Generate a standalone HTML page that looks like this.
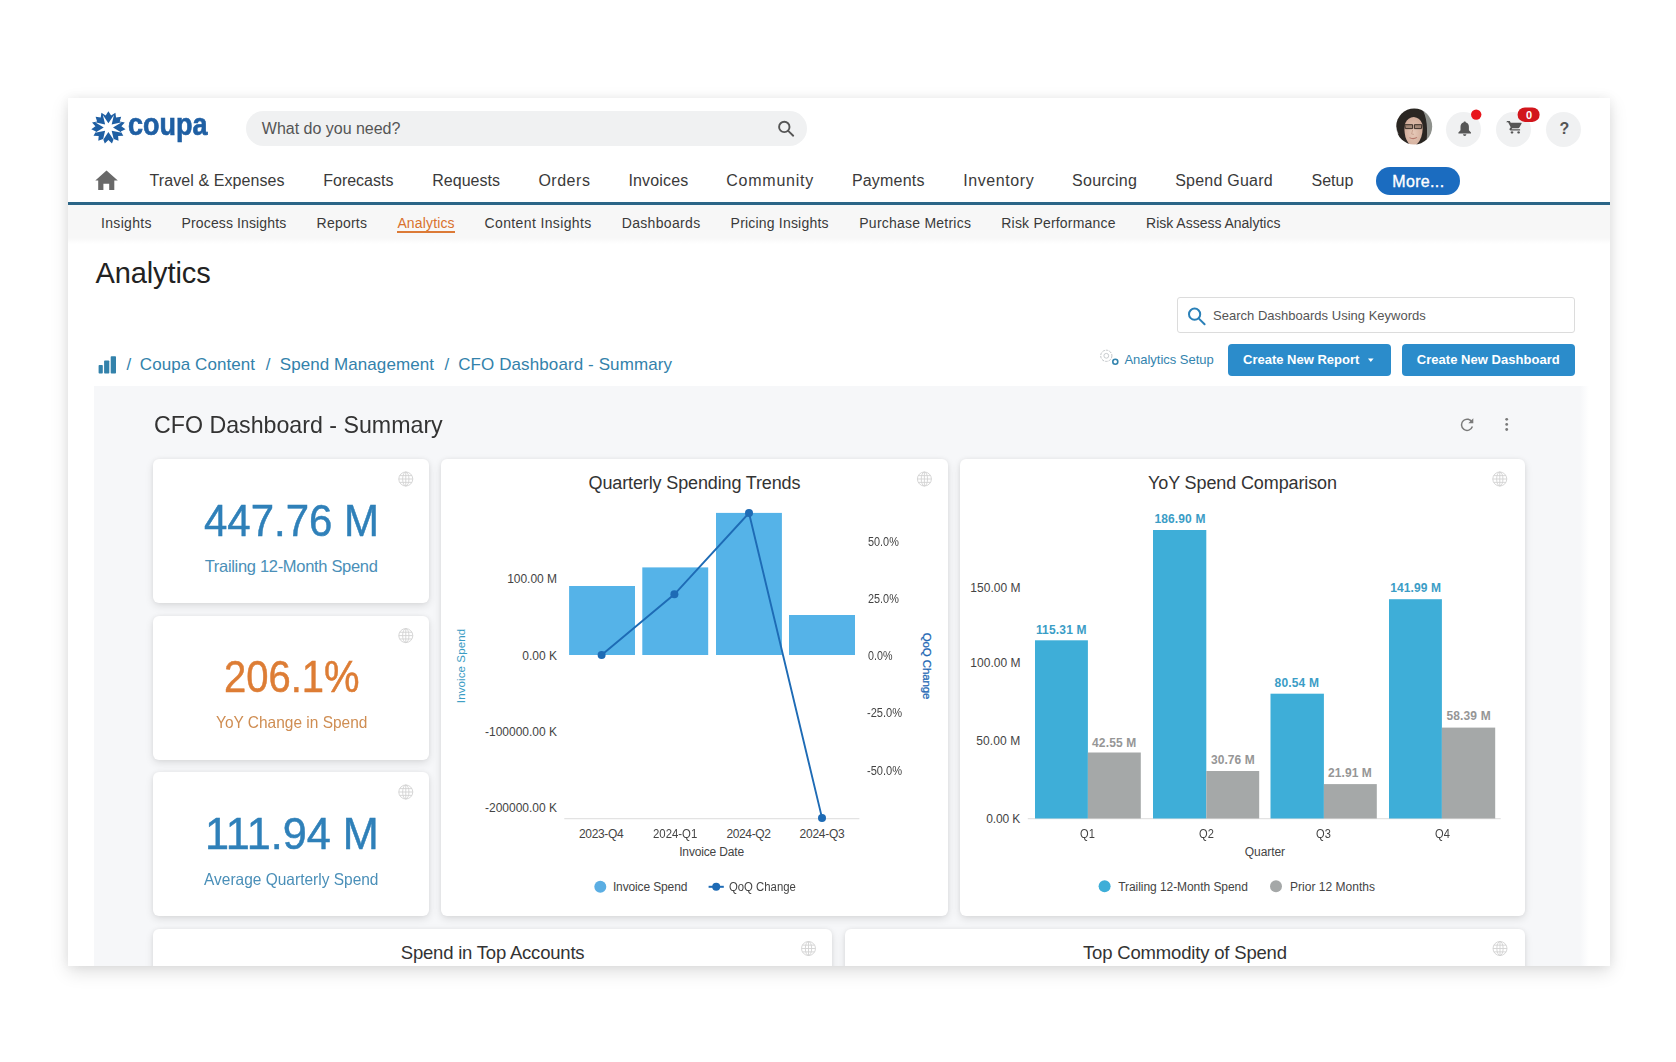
<!DOCTYPE html>
<html lang="en"><head><meta charset="utf-8"><title>Coupa Analytics - CFO Dashboard - Summary</title>
<style>
html,body{margin:0;padding:0;background:#fff;}
body{width:1676px;height:1062px;position:relative;overflow:hidden;font-family:"Liberation Sans",sans-serif;}
#win{position:absolute;left:68px;top:98px;width:1542px;height:868px;overflow:hidden;background:#fff;box-shadow:0 6px 17px rgba(0,0,0,.13),0 0 10px rgba(0,0,0,.05);}
#page{position:absolute;left:-68px;top:-98px;width:1676px;height:1062px;}
#page div,#page span.t,#page svg{position:absolute;}
span.t{white-space:pre;display:block;}
.card{background:#fff;border-radius:6px;box-shadow:0 3px 8px rgba(0,0,0,.11),0 0 4px rgba(0,0,0,.05);}
.circ{border-radius:50%;background:#f0f1f2;}
.btn{background:#2b8ccb;border-radius:4px;}
</style></head><body>
<div id="win"><div id="page">
<!-- header -->
<div style="left:246px;top:111px;width:561px;height:35px;border-radius:18px;background:#f0f1f2"></div>
<div class="circ" style="left:1446px;top:112px;width:35px;height:35px"></div>
<div class="circ" style="left:1496px;top:112px;width:35px;height:35px"></div>
<div class="circ" style="left:1546px;top:112px;width:35px;height:35px"></div>
<div style="left:1376px;top:167px;width:84px;height:28px;border-radius:14px;background:#1b6cc0"></div>
<div style="left:68px;top:202px;width:1542px;height:3px;background:#2b6587"></div>
<div style="left:68px;top:205px;width:1542px;height:39px;background:linear-gradient(#f7f7f7 0,#f7f7f7 84%,#fff 100%)"></div>
<div style="left:397px;top:231px;width:58px;height:2px;background:#dc7a36"></div>
<!-- toolbar -->
<div style="left:1177px;top:297px;width:396px;height:34px;border:1px solid #dcdcdc;border-radius:3px;background:#fff"></div>
<div class="btn" style="left:1228px;top:344px;width:163px;height:32px"></div>
<div class="btn" style="left:1402px;top:344px;width:173px;height:32px"></div>
<!-- dashboard panel -->
<div style="left:94px;top:386px;width:1495px;height:600px;background:linear-gradient(90deg,#f6f7f9 0,#f6f7f9 1486px,#fff 1495px)"></div>
<div class="card" style="left:153px;top:459px;width:276px;height:144px"></div>
<div class="card" style="left:153px;top:616px;width:276px;height:144px"></div>
<div class="card" style="left:153px;top:772px;width:276px;height:144px"></div>
<div class="card" style="left:441px;top:459px;width:507px;height:457px"></div>
<div class="card" style="left:960px;top:459px;width:565px;height:457px"></div>
<div class="card" style="left:153px;top:929px;width:679px;height:80px"></div>
<div class="card" style="left:845px;top:929px;width:680px;height:80px"></div>
<svg width="1676" height="1062" viewBox="0 0 1676 1062" style="left:0;top:0">
<polygon fill="#1f5fa3" points="108.40,111.26 111.12,115.45 115.40,112.67 116.08,117.55 121.18,116.67 119.72,121.39 124.76,122.55 121.40,126.30 125.51,129.31 120.83,131.44 123.30,135.77 118.11,135.91 118.51,140.82 113.72,138.94 111.98,143.58 108.40,140.02 104.82,143.58 103.08,138.94 98.29,140.82 98.69,135.91 93.50,135.77 95.97,131.44 91.29,129.31 95.40,126.30 92.04,122.55 97.08,121.39 95.62,116.67 100.72,117.55 101.40,112.67 105.68,115.45"/><polygon fill="#fff" points="113.93,114.92 111.68,124.48 121.75,122.35 113.04,127.60 121.75,132.85 111.68,130.72 113.93,140.28 108.40,132.01 102.87,140.28 105.12,130.72 95.05,132.85 103.76,127.60 95.05,122.35 105.12,124.48 102.87,114.92 108.40,123.19"/>
<path fill="#696969" d="M106.5 170.4 L95.3 180.5 H98.2 V190.1 H103.4 V183.7 H109.2 V190.1 H114.3 V180.5 H117.8 Z"/>
<g fill="none" stroke="#555" stroke-width="1.9" stroke-linecap="round"><circle cx="784.3" cy="126.9" r="5.2"/><path d="M788.2 130.9 L793.2 135.7"/></g>
<defs><clipPath id="av"><circle cx="1414.2" cy="126.5" r="18"/></clipPath><filter id="avb" x="-10%" y="-10%" width="120%" height="120%"><feGaussianBlur stdDeviation="0.75"/></filter><radialGradient id="skin" cx="0.5" cy="0.55" r="0.6"><stop offset="0" stop-color="#e6c9b8"/><stop offset="1" stop-color="#cfa996"/></radialGradient></defs>
<g clip-path="url(#av)"><g filter="url(#avb)"><rect x="1394" y="106" width="41" height="41" fill="#2b2524"/><path d="M1421.5 108 Q1429.5 120 1426 146 L1436 146 L1436 106 L1418 106Z" fill="#8e918c"/><path d="M1396 118 Q1395 126 1398.5 134 L1394 134 L1394 112Z" fill="#a4a6a3"/><path d="M1413.8 117 Q1420 117.5 1422.3 124 Q1423.6 134 1419.5 141 Q1416.5 146 1412 146 Q1407.5 143.5 1405.4 137 Q1403.6 129 1405.3 123 Q1408 117.5 1413.8 117Z" fill="url(#skin)"/><path d="M1404.6 124.7 h8.0 v3.9 h-7.2z M1414.4 124.7 h7.4 l-0.4 3.9 h-7z" fill="#6b5545" fill-opacity="0.5" stroke="#3a3029" stroke-width="1"/><path d="M1409.5 137.6 Q1413.2 139.8 1417 137.4" fill="none" stroke="#b5786c" stroke-width="1.1"/><path d="M1412.6 130 L1411.6 134 L1414 134.4" fill="none" stroke="#c39a88" stroke-width="0.8"/></g></g>
<path fill="#565656" d="M1464.7 121.4 c-0.8 0 -1.2 0.5 -1.2 1.1 c-2 0.5 -3 2.2 -3 4.3 v3.5 l-2.1 2.3 v0.8 h12.6 v-0.8 l-2.1 -2.3 v-3.5 c0 -2.1 -1 -3.8 -3 -4.3 c0 -0.6 -0.4 -1.1 -1.2 -1.1z M1463 134.3 a1.7 1.7 0 0 0 3.4 0z"/>
<circle cx="1476.2" cy="114.6" r="5.2" fill="#e8151b"/>
<path fill="#555" transform="translate(0 17.2) scale(1 0.855)" d="M1507.2 121.4 h2.6 l0.9 2.1 h10.3 c0.5 0 0.8 0.5 0.6 0.9 l-2.2 4.6 c-0.2 0.5 -0.7 0.8 -1.2 0.8 h-6 l-0.7 1.3 h8.6 v1.4 h-9.4 c-1 0 -1.6 -1 -1.1 -1.9 l1.1 -2 l-2.6 -5.8 h-1.9z M1512 133.4 a1.35 1.35 0 1 0 0.01 0z M1518.6 133.4 a1.35 1.35 0 1 0 0.01 0z"/>
<rect x="1517.6" y="107.4" width="22" height="14.6" rx="7.3" fill="#d2161c"/>
<g fill="#3382ab"><rect x="98.6" y="365" width="4.2" height="8.5" rx="0.8"/><rect x="104.1" y="360.4" width="5.2" height="13.1" rx="0.8"/><rect x="110.7" y="356.2" width="5.3" height="17.3" rx="0.8"/></g>
<g fill="none" stroke="#2a80b8" stroke-width="2" stroke-linecap="round"><circle cx="1194.6" cy="314.2" r="5.6"/><path d="M1198.9 318.6 L1204.6 324.2"/></g>
<g fill="none"><circle cx="1106.3" cy="355.8" r="5.6" stroke="#c2c6c9" stroke-width="1" stroke-dasharray="2.6 1"/><circle cx="1106.3" cy="355.8" r="2.4" stroke="#c2c6c9" stroke-width="0.9"/><circle cx="1115.3" cy="361.8" r="2.5" stroke="#3384ae" stroke-width="1.6"/></g>
<path d="M1368 358.6 h5.6 l-2.8 3.4z" fill="#fff"/>
<g fill="none" stroke="#7a7a7a" stroke-width="1.5"><path d="M1472.2 422.5 A5.6 5.6 0 1 0 1472.4 426.6"/></g><path d="M1473.3 418.2 v5 h-5z" fill="#7a7a7a"/>
<g fill="#7a7a7a"><circle cx="1506.7" cy="419.3" r="1.4"/><circle cx="1506.7" cy="424.4" r="1.4"/><circle cx="1506.7" cy="429.5" r="1.4"/></g>
<g fill="none" stroke="#d2d2d2" stroke-width="0.9"><circle cx="405.8" cy="479" r="7"/><ellipse cx="405.8" cy="479" rx="3.15" ry="7"/><path d="M398.8 479H412.8M399.64 475.64H411.96M399.64 482.36H411.96M405.8 472V486"/></g>
<g fill="none" stroke="#d2d2d2" stroke-width="0.9"><circle cx="405.8" cy="635.6" r="7"/><ellipse cx="405.8" cy="635.6" rx="3.15" ry="7"/><path d="M398.8 635.6H412.8M399.64 632.24H411.96M399.64 638.96H411.96M405.8 628.6V642.6"/></g>
<g fill="none" stroke="#d2d2d2" stroke-width="0.9"><circle cx="405.8" cy="792" r="7"/><ellipse cx="405.8" cy="792" rx="3.15" ry="7"/><path d="M398.8 792H412.8M399.64 788.64H411.96M399.64 795.36H411.96M405.8 785V799"/></g>
<g fill="none" stroke="#d2d2d2" stroke-width="0.9"><circle cx="924.4" cy="479" r="7"/><ellipse cx="924.4" cy="479" rx="3.15" ry="7"/><path d="M917.4 479H931.4M918.24 475.64H930.56M918.24 482.36H930.56M924.4 472V486"/></g>
<g fill="none" stroke="#d2d2d2" stroke-width="0.9"><circle cx="1499.8" cy="479" r="7"/><ellipse cx="1499.8" cy="479" rx="3.15" ry="7"/><path d="M1492.8 479H1506.8M1493.64 475.64H1505.96M1493.64 482.36H1505.96M1499.8 472V486"/></g>
<g fill="none" stroke="#d2d2d2" stroke-width="0.9"><circle cx="808.5" cy="948.5" r="7"/><ellipse cx="808.5" cy="948.5" rx="3.15" ry="7"/><path d="M801.5 948.5H815.5M802.34 945.14H814.66M802.34 951.86H814.66M808.5 941.5V955.5"/></g>
<g fill="none" stroke="#d2d2d2" stroke-width="0.9"><circle cx="1500" cy="948.5" r="7"/><ellipse cx="1500" cy="948.5" rx="3.15" ry="7"/><path d="M1493 948.5H1507M1493.84 945.14H1506.16M1493.84 951.86H1506.16M1500 941.5V955.5"/></g>
<path d="M564.3 818.7 H859.4" stroke="#e3e3e3" stroke-width="1.2"/>
<rect x="569.1" y="586" width="65.9" height="69.0" fill="#55b3e8"/>
<rect x="642.3" y="567.4" width="65.9" height="87.6" fill="#55b3e8"/>
<rect x="716" y="512.9" width="65.9" height="142.1" fill="#55b3e8"/>
<rect x="789.0" y="615" width="66.0" height="40.0" fill="#55b3e8"/>
<polyline fill="none" stroke="#1e6bb5" stroke-width="1.9" points="601.6,655 674.4,594.3 749,513 822,817.9"/>
<circle cx="601.6" cy="655" r="4" fill="#1e6bb5"/>
<circle cx="674.4" cy="594.3" r="4" fill="#1e6bb5"/>
<circle cx="749" cy="513" r="4" fill="#1e6bb5"/>
<circle cx="822" cy="817.9" r="4" fill="#1e6bb5"/>
<circle cx="600.3" cy="886.8" r="6" fill="#5baee3"/>
<path d="M708.6 886.8 H723.8" stroke="#1e6bb5" stroke-width="2"/><circle cx="716.2" cy="886.8" r="4" fill="#1e6bb5"/>
<path d="M1027.8 818.6 H1500.7" stroke="#e3e3e3" stroke-width="1.2"/>
<rect x="1035" y="640.3" width="52.9" height="178.2" fill="#3eaed8"/>
<rect x="1153" y="530" width="53.3" height="288.5" fill="#3eaed8"/>
<rect x="1270.5" y="693.7" width="53.4" height="124.8" fill="#3eaed8"/>
<rect x="1389" y="599.2" width="52.9" height="219.3" fill="#3eaed8"/>
<rect x="1087.9" y="752.5" width="52.9" height="66.0" fill="#a5a8a8"/>
<rect x="1206.3" y="771" width="52.9" height="47.5" fill="#a5a8a8"/>
<rect x="1323.9" y="784.1" width="52.9" height="34.4" fill="#a5a8a8"/>
<rect x="1441.9" y="727.6" width="53.3" height="90.9" fill="#a5a8a8"/>
<circle cx="1104.6" cy="886.3" r="6" fill="#3eaed8"/><circle cx="1276" cy="886.3" r="6" fill="#a5a8a8"/>
</svg>
<span id="t0" class="t" style="font-size:16px;line-height:20px;color:#555;letter-spacing:-0.010px;left:261.8px;top:118.9px;">What do you need?</span>
<span id="t1" class="t" style="font-size:16px;line-height:20px;color:#3a3a3a;letter-spacing:0.082px;left:149.5px;top:171.4px;">Travel &amp; Expenses</span>
<span id="t2" class="t" style="font-size:16px;line-height:20px;color:#3a3a3a;letter-spacing:-0.019px;left:323.3px;top:171.4px;">Forecasts</span>
<span id="t3" class="t" style="font-size:16px;line-height:20px;color:#3a3a3a;letter-spacing:0.029px;left:432.2px;top:171.4px;">Requests</span>
<span id="t4" class="t" style="font-size:16px;line-height:20px;color:#3a3a3a;letter-spacing:0.519px;left:538.4px;top:171.4px;">Orders</span>
<span id="t5" class="t" style="font-size:16px;line-height:20px;color:#3a3a3a;letter-spacing:0.157px;left:628.4px;top:171.4px;">Invoices</span>
<span id="t6" class="t" style="font-size:16px;line-height:20px;color:#3a3a3a;letter-spacing:0.749px;left:726.3px;top:171.4px;">Community</span>
<span id="t7" class="t" style="font-size:16px;line-height:20px;color:#3a3a3a;letter-spacing:0.194px;left:851.9px;top:171.4px;">Payments</span>
<span id="t8" class="t" style="font-size:16px;line-height:20px;color:#3a3a3a;letter-spacing:0.586px;left:963.2px;top:171.4px;">Inventory</span>
<span id="t9" class="t" style="font-size:16px;line-height:20px;color:#3a3a3a;letter-spacing:0.235px;left:1072.1px;top:171.4px;">Sourcing</span>
<span id="t10" class="t" style="font-size:16px;line-height:20px;color:#3a3a3a;letter-spacing:0.231px;left:1175.2px;top:171.4px;">Spend Guard</span>
<span id="t11" class="t" style="font-size:16px;line-height:20px;color:#3a3a3a;letter-spacing:-0.003px;left:1311.5px;top:171.4px;">Setup</span>
<span id="t12" class="t" style="font-size:16px;line-height:20px;color:#fff;letter-spacing:0.334px;left:1392.3px;top:171.7px;-webkit-text-stroke:0.35px #fff;">More...</span>
<span id="t13" class="t" style="font-size:14px;line-height:18px;color:#3a3a3a;letter-spacing:0.321px;left:101.0px;top:214.4px;">Insights</span>
<span id="t14" class="t" style="font-size:14px;line-height:18px;color:#3a3a3a;letter-spacing:0.125px;left:181.6px;top:214.4px;">Process Insights</span>
<span id="t15" class="t" style="font-size:14px;line-height:18px;color:#3a3a3a;letter-spacing:0.228px;left:316.6px;top:214.4px;">Reports</span>
<span id="t16" class="t" style="font-size:14px;line-height:18px;color:#3a3a3a;letter-spacing:0.362px;left:484.6px;top:214.4px;">Content Insights</span>
<span id="t17" class="t" style="font-size:14px;line-height:18px;color:#3a3a3a;letter-spacing:0.333px;left:621.7px;top:214.4px;">Dashboards</span>
<span id="t18" class="t" style="font-size:14px;line-height:18px;color:#3a3a3a;letter-spacing:0.197px;left:730.6px;top:214.4px;">Pricing Insights</span>
<span id="t19" class="t" style="font-size:14px;line-height:18px;color:#3a3a3a;letter-spacing:0.230px;left:859.3px;top:214.4px;">Purchase Metrics</span>
<span id="t20" class="t" style="font-size:14px;line-height:18px;color:#3a3a3a;letter-spacing:0.196px;left:1001.3px;top:214.4px;">Risk Performance</span>
<span id="t21" class="t" style="font-size:14px;line-height:18px;color:#3a3a3a;letter-spacing:-0.015px;left:1146.1px;top:214.4px;">Risk Assess Analytics</span>
<span id="t22" class="t" style="font-size:14px;line-height:18px;color:#d9712c;letter-spacing:0.146px;left:397.4px;top:214.4px;">Analytics</span>
<span id="t23" class="t" style="font-size:29px;line-height:36px;color:#222;letter-spacing:-0.093px;left:95.4px;top:254.8px;">Analytics</span>
<span id="t24" class="t" style="font-size:17px;line-height:21px;color:#3382ab;left:126.5px;top:354.3px;">/</span>
<span id="t25" class="t" style="font-size:17px;line-height:21px;color:#3382ab;letter-spacing:0.077px;left:139.8px;top:354.3px;">Coupa Content</span>
<span id="t26" class="t" style="font-size:17px;line-height:21px;color:#3382ab;left:265.8px;top:354.3px;">/</span>
<span id="t27" class="t" style="font-size:17px;line-height:21px;color:#3382ab;letter-spacing:0.066px;left:279.8px;top:354.3px;">Spend Management</span>
<span id="t28" class="t" style="font-size:17px;line-height:21px;color:#3382ab;left:444.5px;top:354.3px;">/</span>
<span id="t29" class="t" style="font-size:17px;line-height:21px;color:#3382ab;letter-spacing:0.099px;left:458.2px;top:354.3px;">CFO Dashboard - Summary</span>
<span id="t30" class="t" style="font-size:13px;line-height:16px;color:#555;letter-spacing:0.012px;left:1213.0px;top:307.6px;">Search Dashboards Using Keywords</span>
<span id="t31" class="t" style="font-size:13px;line-height:16px;color:#3384ae;letter-spacing:-0.015px;left:1124.4px;top:352.1px;">Analytics Setup</span>
<span id="t32" class="t" style="font-size:13px;line-height:16px;color:#fff;font-weight:700;left:1243.0px;top:352.1px;">Create New Report</span>
<span id="t33" class="t" style="font-size:13px;line-height:16px;color:#fff;font-weight:700;letter-spacing:0.035px;left:1416.8px;top:352.1px;">Create New Dashboard</span>
<span id="t34" class="t" style="font-size:24px;line-height:30px;color:#333;left:153.6px;top:409.6px;transform:scaleX(0.9664);transform-origin:0 50%;">CFO Dashboard - Summary</span>
<span id="t35" class="t" style="font-size:44px;line-height:55px;color:#2f80b9;left:203.6px;top:492.8px;transform:scaleX(0.9544);transform-origin:0 50%;-webkit-text-stroke:0.5px #2f80b9;">447.76 M</span>
<span id="t36" class="t" style="font-size:16.5px;line-height:21px;color:#4a8fb8;letter-spacing:-0.313px;left:204.7px;top:556.0px;">Trailing 12-Month Spend</span>
<span id="t37" class="t" style="font-size:44px;line-height:55px;color:#dd7d35;left:223.9px;top:649.1px;transform:scaleX(0.9086);transform-origin:0 50%;-webkit-text-stroke:0.5px #dd7d35;">206.1%</span>
<span id="t38" class="t" style="font-size:16.5px;line-height:21px;color:#cf8d52;left:215.5px;top:712.3px;transform:scaleX(0.9376);transform-origin:0 50%;">YoY Change in Spend</span>
<span id="t39" class="t" style="font-size:44px;line-height:55px;color:#2f80b9;left:205.0px;top:805.9px;transform:scaleX(0.9817);transform-origin:0 50%;-webkit-text-stroke:0.5px #2f80b9;">111.94 M</span>
<span id="t40" class="t" style="font-size:16.5px;line-height:21px;color:#4a8fb8;left:204.2px;top:869.1px;transform:scaleX(0.9386);transform-origin:0 50%;">Average Quarterly Spend</span>
<span id="t41" class="t" style="font-size:18px;line-height:22px;color:#333;letter-spacing:-0.134px;left:588.6px;top:472.3px;">Quarterly Spending Trends</span>
<span id="t42" class="t" style="font-size:12px;line-height:15px;color:#444;letter-spacing:-0.035px;left:507.2px;top:572.2px;">100.00 M</span>
<span id="t43" class="t" style="font-size:12px;line-height:15px;color:#444;left:522.3px;top:648.9px;">0.00 K</span>
<span id="t44" class="t" style="font-size:12px;line-height:15px;color:#444;letter-spacing:-0.006px;left:485.0px;top:725.2px;">-100000.00 K</span>
<span id="t45" class="t" style="font-size:12px;line-height:15px;color:#444;letter-spacing:-0.006px;left:485.0px;top:801.4px;">-200000.00 K</span>
<span id="t46" class="t" style="font-size:12px;line-height:15px;color:#444;left:867.6px;top:534.5px;transform:scaleX(0.9051);transform-origin:0 50%;">50.0%</span>
<span id="t47" class="t" style="font-size:12px;line-height:15px;color:#444;left:867.6px;top:591.7px;transform:scaleX(0.9051);transform-origin:0 50%;">25.0%</span>
<span id="t48" class="t" style="font-size:12px;line-height:15px;color:#444;left:867.6px;top:648.9px;transform:scaleX(0.8918);transform-origin:0 50%;">0.0%</span>
<span id="t49" class="t" style="font-size:12px;line-height:15px;color:#444;left:866.8px;top:706.1px;transform:scaleX(0.9229);transform-origin:0 50%;">-25.0%</span>
<span id="t50" class="t" style="font-size:12px;line-height:15px;color:#444;left:866.8px;top:763.7px;transform:scaleX(0.9229);transform-origin:0 50%;">-50.0%</span>
<span id="t51" class="t" style="font-size:12px;line-height:15px;color:#444;letter-spacing:-0.334px;left:579.0px;top:827.0px;">2023-Q4</span>
<span id="t52" class="t" style="font-size:12px;line-height:15px;color:#444;left:652.7px;top:827.0px;transform:scaleX(0.9485);transform-origin:0 50%;">2024-Q1</span>
<span id="t53" class="t" style="font-size:12px;line-height:15px;color:#444;letter-spacing:-0.351px;left:726.4px;top:827.0px;">2024-Q2</span>
<span id="t54" class="t" style="font-size:12px;line-height:15px;color:#444;letter-spacing:-0.267px;left:799.6px;top:827.0px;">2024-Q3</span>
<span id="t55" class="t" style="font-size:12px;line-height:15px;color:#444;letter-spacing:-0.155px;left:679.2px;top:844.8px;">Invoice Date</span>
<span id="t56" class="t" style="font-size:12px;line-height:15px;color:#444;letter-spacing:-0.130px;left:612.9px;top:880.3px;">Invoice Spend</span>
<span id="t57" class="t" style="font-size:12px;line-height:15px;color:#444;left:729.4px;top:880.3px;transform:scaleX(0.9446);transform-origin:0 50%;">QoQ Change</span>
<span id="t58" class="t" style="font-size:11.5px;line-height:14px;color:#3a9cc4;letter-spacing:0.109px;left:461.2px;top:665.7px;transform:translate(-50%,-50%) rotate(-90deg);margin-right:-0.109px;">Invoice Spend</span>
<span id="t59" class="t" style="font-size:11.5px;line-height:14px;color:#2468b4;letter-spacing:-0.107px;left:927.0px;top:665.8px;transform:translate(-50%,-50%) rotate(90deg);margin-right:0.107px;-webkit-text-stroke:0.25px #2468b4;">QoQ Change</span>
<span id="t60" class="t" style="font-size:18px;line-height:22px;color:#333;letter-spacing:-0.113px;left:1148.0px;top:472.0px;">YoY Spend Comparison</span>
<span id="t61" class="t" style="font-size:12px;line-height:15px;color:#444;letter-spacing:0.022px;left:970.3px;top:580.5px;">150.00 M</span>
<span id="t62" class="t" style="font-size:12px;line-height:15px;color:#444;letter-spacing:0.022px;left:970.3px;top:656.4px;">100.00 M</span>
<span id="t63" class="t" style="font-size:12px;line-height:15px;color:#444;letter-spacing:0.123px;left:976.2px;top:734.2px;">50.00 M</span>
<span id="t64" class="t" style="font-size:12px;line-height:15px;color:#444;letter-spacing:-0.121px;left:986.2px;top:812.0px;">0.00 K</span>
<span id="t65" class="t" style="font-size:12px;line-height:15px;color:#3b9dc6;font-weight:700;letter-spacing:0.175px;left:1035.9px;top:623.0px;">115.31 M</span>
<span id="t66" class="t" style="font-size:12px;line-height:15px;color:#3b9dc6;font-weight:700;letter-spacing:0.136px;left:1154.4px;top:512.2px;">186.90 M</span>
<span id="t67" class="t" style="font-size:12px;line-height:15px;color:#3b9dc6;font-weight:700;letter-spacing:0.157px;left:1274.6px;top:675.9px;">80.54 M</span>
<span id="t68" class="t" style="font-size:12px;line-height:15px;color:#3b9dc6;font-weight:700;letter-spacing:0.093px;left:1390.3px;top:580.9px;">141.99 M</span>
<span id="t69" class="t" style="font-size:12px;line-height:15px;color:#969696;font-weight:700;letter-spacing:0.157px;left:1092.0px;top:735.6px;">42.55 M</span>
<span id="t70" class="t" style="font-size:12px;line-height:15px;color:#969696;font-weight:700;letter-spacing:0.073px;left:1210.9px;top:753.2px;">30.76 M</span>
<span id="t71" class="t" style="font-size:12px;line-height:15px;color:#969696;font-weight:700;letter-spacing:0.073px;left:1328.0px;top:765.9px;">21.91 M</span>
<span id="t72" class="t" style="font-size:12px;line-height:15px;color:#969696;font-weight:700;letter-spacing:0.157px;left:1446.4px;top:709.3px;">58.39 M</span>
<span id="t73" class="t" style="font-size:12px;line-height:15px;color:#444;left:1079.6px;top:827.3px;transform:scaleX(0.9241);transform-origin:0 50%;">Q1</span>
<span id="t74" class="t" style="font-size:12px;line-height:15px;color:#444;left:1198.5px;top:827.3px;transform:scaleX(0.9241);transform-origin:0 50%;">Q2</span>
<span id="t75" class="t" style="font-size:12px;line-height:15px;color:#444;left:1316.0px;top:827.3px;transform:scaleX(0.9241);transform-origin:0 50%;">Q3</span>
<span id="t76" class="t" style="font-size:12px;line-height:15px;color:#444;left:1434.5px;top:827.3px;transform:scaleX(0.9241);transform-origin:0 50%;">Q4</span>
<span id="t77" class="t" style="font-size:12px;line-height:15px;color:#444;letter-spacing:-0.081px;left:1244.8px;top:845.4px;">Quarter</span>
<span id="t78" class="t" style="font-size:12px;line-height:15px;color:#444;letter-spacing:-0.058px;left:1118.2px;top:879.8px;">Trailing 12-Month Spend</span>
<span id="t79" class="t" style="font-size:12px;line-height:15px;color:#444;letter-spacing:0.021px;left:1290.0px;top:879.8px;">Prior 12 Months</span>
<span id="t80" class="t" style="font-size:18.5px;line-height:23px;color:#333;letter-spacing:-0.205px;left:400.8px;top:940.9px;">Spend in Top Accounts</span>
<span id="t81" class="t" style="font-size:18.5px;line-height:23px;color:#333;letter-spacing:-0.177px;left:1083.0px;top:940.9px;">Top Commodity of Spend</span>
<span id="t82" class="t" style="font-size:32px;line-height:40px;color:#1f5fa3;font-weight:700;left:128.4px;top:104.4px;transform:scaleX(0.8426);transform-origin:0 50%;-webkit-text-stroke:0.7px #1f5fa3;">coupa</span>
<span id="t83" class="t" style="font-size:11px;line-height:14px;color:#fff;font-weight:700;left:1526.0px;top:108.4px;">0</span>
<span id="t84" class="t" style="font-size:16px;line-height:20px;color:#555;font-weight:700;left:1559.6px;top:119.3px;">?</span>
</div></div>
</body></html>
